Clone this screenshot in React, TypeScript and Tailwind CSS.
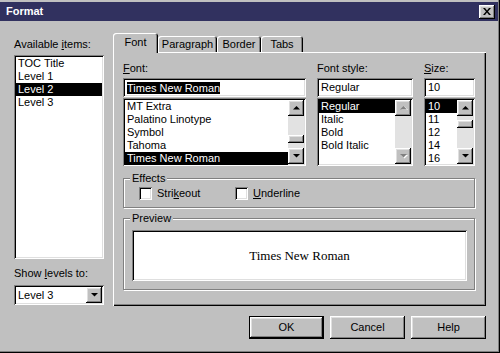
import React from "react";

const sunken =
  "shadow-[inset_1px_1px_0_#808080,inset_-1px_-1px_0_#fff,inset_2px_2px_0_#000,inset_-2px_-2px_0_#dfdfdf]";
const raised =
  "shadow-[inset_-1px_-1px_0_#000,inset_1px_1px_0_#fff,inset_-2px_-2px_0_#808080,inset_2px_2px_0_#dfdfdf]";

const Arrow = ({ down = false, disabled = false }: { down?: boolean; disabled?: boolean }) => (
  <svg width="7" height="5" viewBox="0 0 7 5" className="overflow-visible">
    {disabled && (
      <polygon points={down ? "1,1 8,1 4.5,4.5" : "4.5,0.5 8,4 1,4"} fill="#fff" />
    )}
    <polygon
      points={down ? "0,0 7,0 3.5,3.5" : "3.5,0 7,3.5 0,3.5"}
      fill={disabled ? "#808080" : "#000"}
    />
  </svg>
);

const ScrollBar = ({ thumb, disabled = false }: { thumb?: "top" | "bottom"; disabled?: boolean }) => (
  <div className="w-[16px] h-full flex flex-col">
    <div className={`${raised} bg-[#c0c0c0] w-[16px] h-[16px] flex items-center justify-center`}>
      <Arrow disabled={disabled} />
    </div>
    <div
      className={`bg-[#e2e2e2] flex-1 flex flex-col ${
        thumb === "bottom" ? "justify-end pb-[5px]" : "justify-start pt-[4px]"
      }`}
    >
      {thumb && <div className={`${raised} bg-[#c0c0c0] h-[8px] w-[16px]`} />}
    </div>
    <div className={`${raised} bg-[#c0c0c0] w-[16px] h-[16px] flex items-center justify-center`}>
      <Arrow down disabled={disabled} />
    </div>
  </div>
);

const Items = ({ items, selected }: { items: string[]; selected: number }) => (
  <div className="flex-1 flex flex-col">
    {items.map((t, i) => (
      <div
        key={t}
        className={`h-[13px] leading-[13px] pl-[2px] whitespace-nowrap ${
          i === selected ? "bg-black text-white" : "text-black"
        }`}
      >
        {t}
      </div>
    ))}
  </div>
);

const Field = ({ children }: { children: React.ReactNode }) => (
  <div className={`${sunken} bg-white h-[19px] flex items-center pl-[4px] whitespace-nowrap`}>
    {children}
  </div>
);

const Checkbox = ({ children }: { children: React.ReactNode }) => (
  <div className="flex items-center gap-[5px]">
    <div className={`${sunken} bg-white w-[13px] h-[13px]`} />
    <span className="leading-[13px]">{children}</span>
  </div>
);

const Button = ({ label, isDefault = false }: { label: string; isDefault?: boolean }) => (
  <div
    className={`w-[75px] h-[23px] flex items-center justify-center bg-[#c0c0c0] ${
      isDefault ? "border border-black" : ""
    } ${raised}`}
  >
    {label}
  </div>
);

const Tab = ({ label, active = false, w }: { label: string; active?: boolean; w: string }) => (
  <div
    className={`${w} flex items-center justify-center bg-[#c0c0c0] rounded-t-[3px] shadow-[inset_1px_1px_0_#fff,inset_-1px_0_0_#000,inset_-2px_0_0_#808080] ${
      active ? "h-[20px] -mb-[1px] relative z-10 pb-[2px]" : "h-[16px]"
    }`}
  >
    {label}
  </div>
);

export default function App() {
  return (
    <div className="w-[500px] h-[353px] bg-[#c0c0c0] pt-[2px] pr-[2px] pb-[2px] flex flex-col font-['Liberation_Sans',Arial,sans-serif] text-[11px] text-black shadow-[inset_-1px_-1px_0_#000,inset_-2px_-2px_0_#808080] overflow-hidden">
      {/* title bar */}
      <div className="h-[19px] bg-[#31315f] flex items-center justify-between pl-[6px] pr-[3px]">
        <span className="text-white font-bold text-[11px] leading-[13px]">Format</span>
        <div className={`${raised} bg-[#c0c0c0] w-[16px] h-[14px] flex items-center justify-center`}>
          <svg width="8" height="7" viewBox="0 0 8 7">
            <path d="M0 0h2l2 2.5L6 0h2L5 3.5 8 7H6L4 4.5 2 7H0l3-3.5z" fill="#000" />
          </svg>
        </div>
      </div>

      <div className="flex pl-[14px]">
        {/* left column */}
        <div className="w-[90px] pt-[17px] flex flex-col">
          <div className="leading-[13px]">
            Available <span className="underline">i</span>tems:
          </div>
          <div className={`${sunken} bg-white h-[204px] mt-[4px] p-[2px] flex`}>
            <Items items={["TOC Title", "Level 1", "Level 2", "Level 3"]} selected={2} />
          </div>
          <div className="leading-[13px] mt-[8px]">
            Show <span className="underline">l</span>evels to:
          </div>
          <div className={`${sunken} bg-white h-[20px] mt-[5px] p-[2px] flex items-center`}>
            <span className="flex-1 pl-[2px] leading-[13px]">Level 3</span>
            <div className={`${raised} bg-[#c0c0c0] w-[16px] h-[16px] flex items-center justify-center`}>
              <Arrow down />
            </div>
          </div>
        </div>

        {/* right column */}
        <div className="ml-[9px] w-[373px] pt-[12px] flex flex-col">
          <div className="flex items-end h-[19px]">
            <Tab label="Font" active w="w-[45px]" />
            <Tab label="Paragraph" w="w-[59px]" />
            <Tab label="Border" w="w-[44px]" />
            <Tab label="Tabs" w="w-[42px]" />
          </div>
          <div className="h-[254px] bg-[#c0c0c0] shadow-[inset_1px_1px_0_#fff,inset_-1px_-1px_0_#000,inset_-2px_-2px_0_#808080] pt-[10px] pl-[10px] pr-[11px] flex flex-col">
            <div className="flex gap-[11px]">
              <div className="w-[183px] flex flex-col">
                <div className="leading-[13px]">
                  <span className="underline">F</span>ont:
                </div>
                <div className="mt-[3px]">
                  <Field>
                    <span className="bg-black text-white leading-[12px]">Times New Roman</span>
                  </Field>
                </div>
                <div className={`${sunken} bg-white h-[68px] mt-[1px] p-[2px] flex`}>
                  <Items
                    items={["MT Extra", "Palatino Linotype", "Symbol", "Tahoma", "Times New Roman"]}
                    selected={4}
                  />
                  <ScrollBar thumb="bottom" />
                </div>
              </div>
              <div className="w-[96px] flex flex-col">
                <div className="leading-[13px]">Font style:</div>
                <div className="mt-[3px]">
                  <Field>Regular</Field>
                </div>
                <div className={`${sunken} bg-white h-[68px] mt-[1px] p-[2px] flex`}>
                  <Items items={["Regular", "Italic", "Bold", "Bold Italic"]} selected={0} />
                  <ScrollBar disabled />
                </div>
              </div>
              <div className="w-[51px] flex flex-col">
                <div className="leading-[13px]">
                  <span className="underline">S</span>ize:
                </div>
                <div className="mt-[3px]">
                  <Field>10</Field>
                </div>
                <div className={`${sunken} bg-white h-[68px] mt-[1px] p-[2px] flex`}>
                  <Items items={["10", "11", "12", "14", "16"]} selected={0} />
                  <ScrollBar thumb="top" />
                </div>
              </div>
            </div>

            <fieldset className="mt-[6px] border border-[#808080] shadow-[inset_1px_1px_0_#fff,1px_1px_0_#fff] p-0 m-0">
              <legend className="ml-[6px] px-[2px] leading-[13px] bg-[#c0c0c0]">Effects</legend>
              <div className="flex pl-[15px] pt-[2px] pb-[7px]">
                <div className="w-[96px]">
                  <Checkbox>
                    Stri<span className="underline">k</span>eout
                  </Checkbox>
                </div>
                <Checkbox>
                  <span className="underline">U</span>nderline
                </Checkbox>
              </div>
            </fieldset>

            <fieldset className="mt-[4px] border border-[#808080] shadow-[inset_1px_1px_0_#fff,1px_1px_0_#fff] p-0 m-0">
              <legend className="ml-[6px] px-[2px] leading-[13px] bg-[#c0c0c0]">Preview</legend>
              <div className="pl-[8px] pr-[7px] pt-[5px] pb-[8px]">
                <div
                  className={`${sunken} bg-white h-[51px] flex items-center justify-center font-['Liberation_Serif','Times_New_Roman',serif] text-[13px]`}
                >
                  Times New Roman
                </div>
              </div>
            </fieldset>
          </div>

          <div className="flex justify-end gap-[6px] mt-[10px]">
            <Button label="OK" isDefault />
            <Button label="Cancel" />
            <Button label="Help" />
          </div>
        </div>
      </div>
    </div>
  );
}
